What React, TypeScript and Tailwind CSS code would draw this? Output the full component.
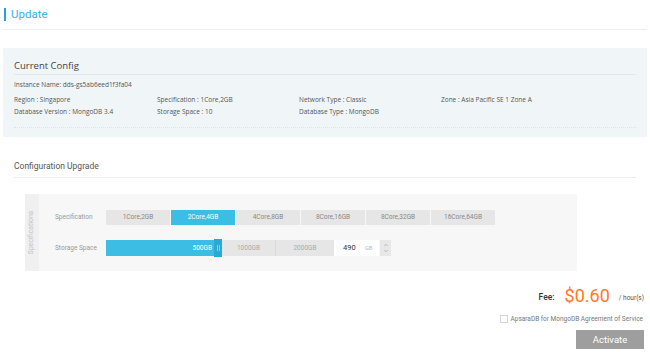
import { ChevronUp, ChevronDown } from 'lucide-react';

const specs = ['1Core,2GB', '2Core,4GB', '4Core,8GB', '8Core,16GB', '8Core,32GB', '16Core,64GB'];

const configRows = [
  ['Region : Singapore', 'Specification : 1Core,2GB', 'Network Type : Classic', 'Zone : Asia Pacific SE 1 Zone A'],
  ['Database Version : MongoDB 3.4', 'Storage Space : 10', 'Database Type : MongoDB', ''],
];

export default function App() {
  return (
    <div className="w-[650px] h-[352px] overflow-hidden bg-white font-['Roboto',sans-serif]">
      {/* Header */}
      <div className="mx-[3px] h-[30px] border-b border-[#efefef] flex items-center">
        <div className="ml-[1px] w-[2px] h-[13px] bg-[#1ea4d8]" />
        <span className="ml-[5px] text-[11.5px] text-[#3ab2dc] leading-none">Update</span>
      </div>

      {/* Current Config */}
      <div className="mx-[3px] mt-[18px] h-[89px] bg-[#f0f5f8] px-[11px] font-['Open_Sans',sans-serif] text-[#555]">
        <div className="h-[27px] border-b border-[#e3e8ec] flex items-end pb-[4px]">
          <span className="text-[9.5px] text-[#444] leading-none">Current Config</span>
        </div>
        <div className="h-[13px] flex items-end text-[6.5px] leading-none">Instance Name: dds-gs5ab6eed1f3fa04</div>
        <div className="mt-[6px] border-b border-dotted border-[#dde2e6] pb-[9px]">
          {configRows.map((row, i) => (
            <div key={i} className="grid grid-cols-[143px_142px_142px_1fr] h-[12px] items-center text-[6.5px] leading-none">
              {row.map((c, j) => (
                <span key={j}>{c}</span>
              ))}
            </div>
          ))}
        </div>
      </div>

      {/* Configuration Upgrade */}
      <div className="mx-[14px] mt-[25px] h-[16px] border-b border-[#eeeeee] flex items-start">
        <span className="text-[8.5px] text-[#555] leading-none">Configuration Upgrade</span>
      </div>

      <div className="ml-[25px] mt-[16px] w-[552px] h-[77px] bg-[#f7f7f7] flex">
        <div className="w-[14px] bg-[#f0f0f0] flex items-center justify-center">
          <span className="-rotate-90 whitespace-nowrap text-[7px] text-[#c4c4c4] leading-none">Specifications</span>
        </div>
        <div className="flex-1 pl-[16px] pt-[16px]">
          <div className="flex items-center h-[15px]">
            <span className="w-[51px] text-[6.5px] text-[#999] leading-none">Specification</span>
            <div className="flex gap-[1px]">
              {specs.map((s) => (
                <div
                  key={s}
                  className={`w-[64px] h-[15px] flex items-center justify-center text-[6.5px] leading-none ${
                    s === '2Core,4GB' ? 'bg-[#3cbde4] text-white' : 'bg-[#e6e6e6] text-[#888]'
                  }`}
                >
                  {s}
                </div>
              ))}
            </div>
          </div>
          <div className="flex items-center h-[16px] mt-[15px]">
            <span className="w-[51px] text-[6.5px] text-[#999] leading-none">Storage Space</span>
            <div className="flex h-[16px] items-stretch">
              <div className="relative w-[109px] bg-[#3cbde4] flex items-center justify-end pr-[3px] text-[6.5px] text-white leading-none">
                500GB
                <div className="absolute right-[-7px] top-[-1px] w-[8px] h-[18px] bg-[#2aa9d3] flex items-center justify-center gap-[1px]">
                  <div className="w-[1px] h-[6px] bg-[#7fd3ee]" />
                  <div className="w-[1px] h-[6px] bg-[#7fd3ee]" />
                </div>
              </div>
              <div className="w-[54px] ml-[7px] bg-[#e6e6e6] border-r border-[#dadada] flex items-center justify-center text-[6.5px] text-[#aaa] leading-none">
                1000GB
              </div>
              <div className="w-[58px] bg-[#e6e6e6] flex items-center justify-center text-[6.5px] text-[#aaa] leading-none">
                2000GB
              </div>
              <div className="w-[45px] bg-white flex items-center pl-[9px] gap-[9px] leading-none">
                <span className="text-[7.5px] text-[#333]">490</span>
                <span className="text-[6px] text-[#bbb]">GB</span>
              </div>
              <div className="ml-[1px] w-[11px] bg-[#e8e8e8] flex flex-col items-center justify-center text-[#aaa]">
                <ChevronUp size={6} strokeWidth={3} />
                <ChevronDown size={6} strokeWidth={3} />
              </div>
            </div>
          </div>
        </div>
      </div>

      {/* Fee */}
      <div className="mt-[15px] mr-[6px] flex items-center justify-end h-[20px]">
        <span className="text-[8.5px] font-medium text-[#333] leading-none mt-[3px]">Fee:</span>
        <span className="ml-[10px] text-[18px] text-[#ff7a1f] leading-none">$0.60</span>
        <span className="ml-[9px] text-[6.5px] text-[#555] leading-none mt-[4px]">/ hour(s)</span>
      </div>
      <div className="mt-[7px] mr-[7px] flex items-center justify-end h-[12px]">
        <div className="w-[8px] h-[8px] border border-[#d6d6d6] bg-white" />
        <span className="ml-[3px] text-[6.5px] text-[#777] leading-none">ApsaraDB for MongoDB Agreement of Service</span>
      </div>
      <div className="mt-[5px] mr-[6px] flex justify-end">
        <div className="w-[68px] h-[19px] bg-[#9e9e9e] flex items-center justify-center text-[9.5px] text-white leading-none">
          Activate
        </div>
      </div>
    </div>
  );
}
